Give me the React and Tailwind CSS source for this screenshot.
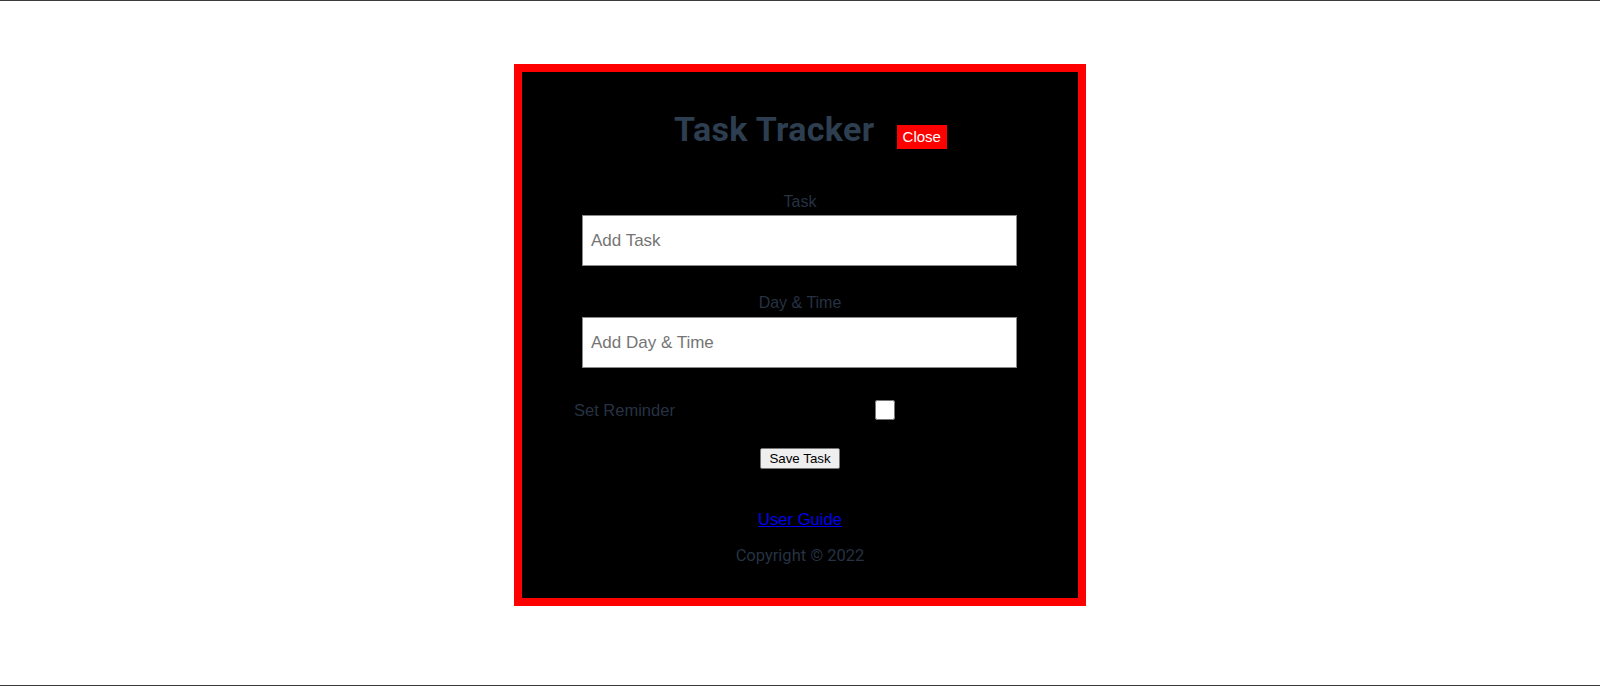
import { useState } from "react";

function Field({ label, placeholder, first }) {
  return (
    <div className="flex flex-col">
      <label className={(first ? "mt-[45px]" : "mt-[28px]") + " text-center text-[16px] leading-[18px] text-[#263243]"}>
        {label}
      </label>
      <input
        type="text"
        placeholder={placeholder}
        className={(first ? "mt-[4px]" : "mt-[5px]") + " ml-[60px] w-[435px] h-[51px] bg-white border border-[#8a8a8a] px-[8px] text-[17px] text-black placeholder:text-[#757575] outline-none"}
      />
    </div>
  );
}

export default function App() {
  const [reminder, setReminder] = useState(false);
  return (
    <div className="h-[686px] w-full bg-white border-t border-b border-[#3a3a3a] pt-[63px] font-['Liberation_Sans',Arial,sans-serif]">
      <div className="mx-auto w-[572px] h-[542px] border-8 border-[#ff0000] bg-black flex flex-col">
        {/* header */}
        <div className="mt-[38px] h-[38px] flex items-start pl-[152px] gap-[22px]">
          <h1 className="font-['Roboto',sans-serif] font-bold text-[34px] tracking-[0.35px] leading-[38px] text-[#2c3e50]">Task Tracker</h1>
          <button className="mt-[15px] h-[24px] px-[6px] bg-[#ff0000] text-white text-[15px] leading-[24px] font-['Liberation_Sans',Arial,sans-serif]">
            Close
          </button>
        </div>

        <Field first label="Task" placeholder="Add Task" />
        <Field label="Day & Time" placeholder="Add Day & Time" />

        <div className="mt-[32px] ml-[52px] w-[466px] h-[20px] flex items-center">
          <label className="flex-1 text-[16.5px] leading-[18px] text-[#263243]">Set Reminder</label>
          <div className="flex-[2] flex justify-center">
            <input
              type="checkbox"
              checked={reminder}
              onChange={(e) => setReminder(e.target.checked)}
              className="w-[20px] h-[20px] m-0"
            />
          </div>
        </div>

        <button className="mt-[28px] self-center h-[21px] px-[8px] bg-[#efefef] border border-[#767676] rounded-[2px] text-[13.33px] leading-[19px] text-black">
          Save Task
        </button>

        <a href="#" className="mt-[42px] self-center text-[16.6px] leading-[18px] text-[#0000ee] underline">
          User Guide
        </a>
        <p className="mt-[18px] self-center font-['Roboto',sans-serif] text-[16.5px] leading-[18px] text-[#263243]">
          Copyright © 2022
        </p>
      </div>
    </div>
  );
}
